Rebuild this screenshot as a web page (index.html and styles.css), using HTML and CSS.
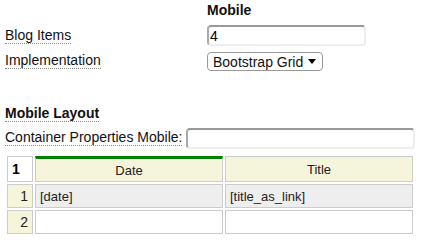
FILE: index.html
```html
<!DOCTYPE html>
<html lang="en">
<head>
	<meta charset="UTF-8">
	<title>Mobile Layout</title>
	<link rel="stylesheet" href="styles.css">
</head>
<body>

	<div class="settings">
		<div></div>
		<div class="col-head">Mobile</div>

		<div><span class="label">Blog Items</span></div>
		<div><input class="text-input" type="text" value="4"></div>

		<div><span class="label">Implementation</span></div>
		<div>
			<div class="select">
				<select>
					<option>Bootstrap Grid</option>
				</select>
			</div>
		</div>
	</div>

	<h4 class="section"><span class="label">Mobile Layout</span></h4>

	<div class="container-row">
		<span class="label">Container Properties Mobile:</span>
		<input class="text-input wide" type="text">
	</div>

	<table class="grid">
		<colgroup>
			<col class="col-num">
			<col>
			<col>
		</colgroup>
		<tr>
			<th class="corner">1</th>
			<th class="active">Date</th>
			<th>Title</th>
		</tr>
		<tr class="filled">
			<td class="num">1</td>
			<td>[date]</td>
			<td>[title_as_link]</td>
		</tr>
		<tr>
			<td class="num">2</td>
			<td></td>
			<td></td>
		</tr>
	</table>

</body>
</html>
```

FILE: styles.css
```css
* {
	margin: 0;
	padding: 0;
	box-sizing: border-box;
}

body {
	font-family: "Liberation Sans", Arial, sans-serif;
	font-size: 14px;
	color: #111;
	padding: 2px 5px 0;
}

/* form atas */
.settings {
	display: grid;
	grid-template-columns: 202px 160px;
	row-gap: 6px;
	align-items: end;
}

.col-head {
	font-weight: bold;
	line-height: 16px;
	margin-bottom: 1px;
}

.label {
	display: inline-block;
	line-height: 16px;
	border-bottom: 1px dotted #888;
}

.settings .label {
	margin-bottom: 2px;
}

.text-input {
	display: block;
	width: 159px;
	height: 21px;
	border-style: solid;
	border-width: 2px;
	border-color: #999 #eee #eee #aaa;
	border-radius: 4px;
	font-family: inherit;
	font-size: 14px;
	padding: 0 1px;
	color: #000;
	outline: none;
}

.select {
	position: relative;
	width: 116px;
}

.select select {
	appearance: none;
	display: block;
	width: 116px;
	height: 19px;
	border: 1px solid #999;
	border-radius: 4px;
	background: #fff;
	font-family: inherit;
	font-size: 14px;
	color: #111;
	padding: 0 0 0 5px;
}

/* panah select */
.select::after {
	content: "";
	position: absolute;
	right: 7px;
	top: 7px;
	border-left: 4px solid transparent;
	border-right: 4px solid transparent;
	border-top: 5px solid #000;
	pointer-events: none;
}

/* mobile layout */
.section {
	font-size: 14px;
	margin-top: 34px;
}

.container-row {
	display: flex;
	align-items: end;
	margin-top: 6px;
}

.container-row .label {
	margin-bottom: 3px;
}

.text-input.wide {
	width: 229px;
	margin-left: 4px;
}

/* tabel */
.grid {
	border-collapse: separate;
	border-spacing: 2px;
	table-layout: fixed;
	width: 410px;
	margin-top: 5px;
	font-size: 13px;
	color: #222;
}

.grid .col-num {
	width: 26px;
}

.grid th,
.grid td {
	border: 1px solid #ccc;
	height: 24px;
	font-weight: normal;
	padding: 0 4px;
}

.grid th {
	background: #f5f5dc;
	height: 26px;
}

.grid th.corner {
	background: #fff;
	font-weight: bold;
	font-size: 14px;
	text-align: left;
	color: #000;
}

.grid th.active {
	border-top: 3px solid #008000;
}

.grid td.num {
	background: #f5f5dc;
	text-align: right;
	font-size: 14px;
}

.grid tr.filled td {
	background: #eee;
}

.grid tr.filled td.num {
	background: #f5f5dc;
}
```
